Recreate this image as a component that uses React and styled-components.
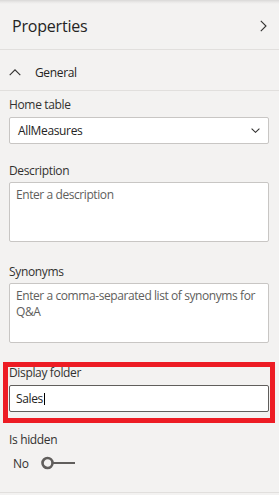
import React from "react";
import styled, { createGlobalStyle } from "styled-components";

const Global = createGlobalStyle`
  html, body { margin: 0; padding: 0; background: #f3f2f1; }
  body { font-family: "Open Sans", "Noto Sans", sans-serif; color: #252423; letter-spacing: -0.35px; }
  * { box-sizing: border-box; }
`;

const Pane = styled.div`
  width: 279px;
  height: 495px;
  background: #f3f2f1;
  display: flex;
  flex-direction: column;
  overflow: hidden;
`;

const Header = styled.div`
  height: 50px;
  flex: none;
  display: flex;
  align-items: center;
  justify-content: space-between;
  padding: 2px 12px 0 12px;
  border-bottom: 1px solid #e1dfdd;
  background: linear-gradient(to bottom, #d9d8d7 0, #e9e8e7 2px, #f3f2f1 4px);
`;

const Title = styled.h1`
  margin: 0;
  font-size: 16px;
  font-weight: 400;
  letter-spacing: -0.2px;
  color: #252423;
`;

const SectionRow = styled.div`
  height: 41px;
  flex: none;
  display: flex;
  align-items: center;
  gap: 14px;
  padding: 4px 0 0 9px;
  border-bottom: 1px solid #e1dfdd;
  font-size: 12px;
  color: #252423;
`;

const Body = styled.div`
  display: flex;
  flex-direction: column;
  padding: 6px 10px 16px 9px;
  border-bottom: 1px solid #e1dfdd;
`;

const Field = styled.div`
  display: flex;
  flex-direction: column;
  margin-top: ${(p) => p.$top || 0}px;
  position: relative;
`;

const Label = styled.div`
  font-size: 12px;
  line-height: 16px;
  color: #323130;
  margin-bottom: ${(p) => (p.$gap ?? 4)}px;
`;

const Select = styled.div`
  height: 27px;
  display: flex;
  align-items: center;
  justify-content: space-between;
  padding: 0 8px 0 8px;
  background: #fff;
  border: 1px solid #c8c6c4;
  border-radius: 2px;
  font-size: 12px;
  color: #252423;
`;

const TextArea = styled.textarea`
  display: block;
  width: 100%;
  height: ${(p) => p.$h}px;
  margin: 0;
  resize: none;
  overflow: hidden;
  padding: 4px 6px;
  background: #fff;
  border: 1px solid #c8c6c4;
  border-radius: 2px;
  font-family: "Open Sans", "Noto Sans", sans-serif;
  font-size: 12px;
  line-height: 16px;
  letter-spacing: -0.42px;
  color: #252423;
  outline: none;
  &::placeholder { color: #605e5c; opacity: 1; }
`;

const InputBox = styled.div`
  height: 27px;
  display: flex;
  align-items: center;
  padding: 0 6px;
  background: #fff;
  border: 1px solid #605e5c;
  border-radius: 2px;
  font-size: 12px;
  color: #252423;
`;

const Caret = styled.span`
  display: inline-block;
  width: 1px;
  height: 12px;
  margin-left: 1px;
  background: #000;
`;

const Highlight = styled.div`
  position: absolute;
  top: -3px;
  bottom: -11px;
  left: -6px;
  right: -6px;
  border: 5px solid #ed1c24;
  pointer-events: none;
`;

const ToggleRow = styled.div`
  display: flex;
  align-items: center;
  gap: 12px;
  height: 26px;
  margin-top: 2px;
  padding-left: 4px;
  font-size: 12px;
  color: #323130;
`;

const ChevronRight = () => (
  <svg width="7" height="12" viewBox="0 0 7 12">
    <polyline points="0.8,0.8 6,6 0.8,11.2" fill="none" stroke="#323130" strokeWidth="1.1" />
  </svg>
);

const ChevronUp = () => (
  <svg width="12" height="7" viewBox="0 0 12 7">
    <polyline points="0.7,6.2 6,0.9 11.3,6.2" fill="none" stroke="#323130" strokeWidth="1.1" />
  </svg>
);

const ChevronDown = () => (
  <svg width="9" height="5" viewBox="0 0 9 5">
    <polyline points="0.6,0.6 4.5,4.3 8.4,0.6" fill="none" stroke="#323130" strokeWidth="1.1" />
  </svg>
);

const Toggle = () => (
  <svg width="36" height="14" viewBox="0 0 36 14">
    <circle cx="6.5" cy="7" r="5" fill="none" stroke="#605e5c" strokeWidth="2.6" />
    <line x1="11.5" y1="7" x2="34" y2="7" stroke="#605e5c" strokeWidth="2" />
  </svg>
);

export default function App() {
  return (
    <>
      <Global />
      <Pane>
        <Header>
          <Title>Properties</Title>
          <ChevronRight />
        </Header>
        <SectionRow>
          <ChevronUp />
          <span>General</span>
        </SectionRow>
        <Body>
          <Field>
            <Label>Home table</Label>
            <Select>
              <span>AllMeasures</span>
              <ChevronDown />
            </Select>
          </Field>
          <Field $top={19}>
            <Label $gap={3}>Description</Label>
            <TextArea $h={60} placeholder="Enter a description" readOnly />
          </Field>
          <Field $top={22}>
            <Label $gap={3}>Synonyms</Label>
            <TextArea $h={60} placeholder="Enter a comma-separated list of synonyms for Q&A" readOnly />
          </Field>
          <Field $top={22}>
            <Label>Display folder</Label>
            <InputBox>
              <span>Sales</span>
              <Caret />
            </InputBox>
            <Highlight />
          </Field>
          <Field $top={20}>
            <Label $gap={0}>Is hidden</Label>
            <ToggleRow>
              <span>No</span>
              <Toggle />
            </ToggleRow>
          </Field>
        </Body>
      </Pane>
    </>
  );
}
